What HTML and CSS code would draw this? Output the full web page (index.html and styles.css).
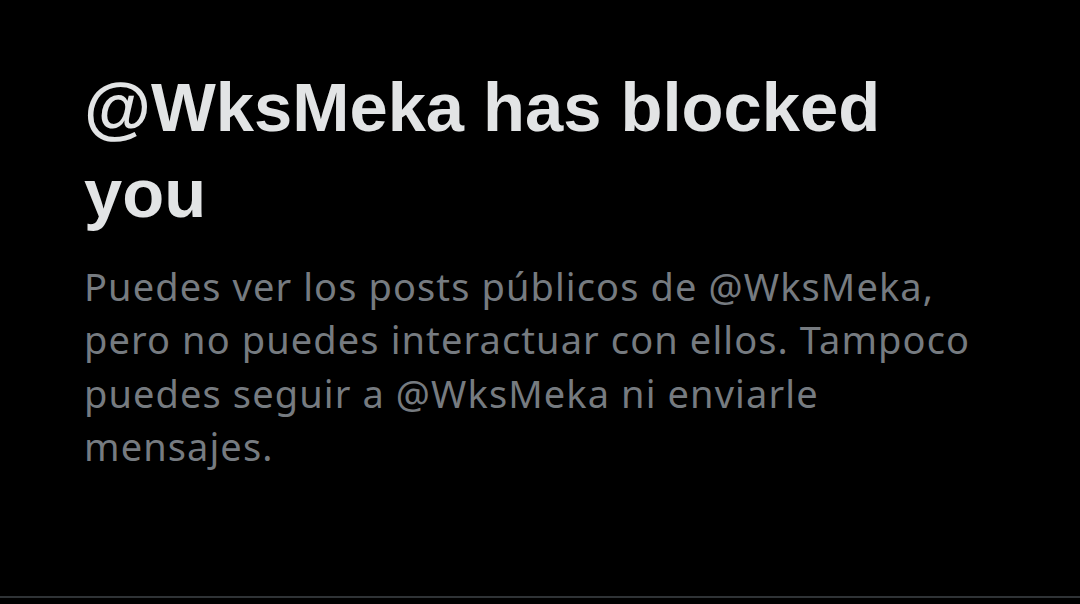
FILE: index.html
```html
<!DOCTYPE html>
<html lang="es">
<head>
<meta charset="utf-8">
<link rel="stylesheet" href="styles.css">
</head>
<body>
<main class="page">
  <section class="notice">
    <h1 class="title">@WksMeka has blocked you</h1>
    <p class="desc">Puedes ver los posts públicos de @WksMeka, pero no puedes interactuar con ellos. Tampoco puedes seguir a @WksMeka ni enviarle mensajes.</p>
  </section>
  <div class="divider"></div>
</main>
</body>
</html>
```
FILE: styles.css
```css
html, body {
  margin: 0;
  padding: 0;
  background: #000;
}
.page {
  width: 1080px;
  height: 604px;
  display: flex;
  flex-direction: column;
  box-sizing: border-box;
  overflow: hidden;
}
.notice {
  flex: 1;
  padding: 65px 0 0 84px;
}
.title {
  margin: 0;
  font-family: "Liberation Sans", Arial, sans-serif;
  font-weight: 700;
  font-size: 68.7px;
  line-height: 86px;
  color: #e2e4e5;
  width: 880px;
}
.desc {
  margin: 23px 0 0 0;
  font-family: "Noto Sans", sans-serif;
  font-size: 38px;
  line-height: 53.3px;
  letter-spacing: 1.1px;
  color: #767b80;
  width: 925px;
}
.divider {
  height: 2px;
  background: #2f3336;
  margin-bottom: 6px;
}
```
